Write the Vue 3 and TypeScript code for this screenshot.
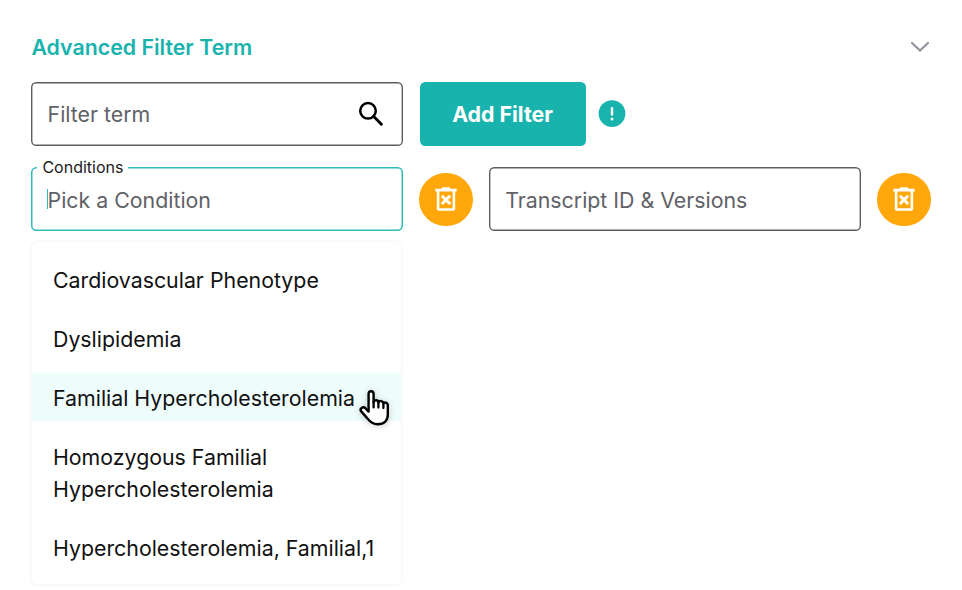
<script setup lang="ts">
import { ref } from 'vue'

const conditions: string[] = [
  'Cardiovascular Phenotype',
  'Dyslipidemia',
  'Familial Hypercholesterolemia',
  'Homozygous Familial Hypercholesterolemia',
  'Hypercholesterolemia, Familial,1',
]
const active = ref(2)
</script>

<template>
  <main class="panel">
    <header class="head">
      <h2 class="title"><span>Advanced Filter Term</span></h2>
      <svg class="chevron" viewBox="0 0 20 12" width="20" height="12">
        <path d="M2 2 L10 9.6 L18 2" fill="none" stroke="#9294a0" stroke-width="2.2" stroke-linecap="round" />
      </svg>
    </header>

    <div class="row">
      <div class="field">
        <span class="placeholder">Filter term</span>
        <svg class="search" viewBox="0 0 26 26" width="26" height="26">
          <circle cx="10" cy="9.8" r="7.8" fill="none" stroke="#000" stroke-width="2.5" />
          <path d="M15.5 15.3 L23.4 23.2" stroke="#000" stroke-width="2.9" stroke-linecap="round" />
        </svg>
      </div>
      <button class="add"><span>Add Filter</span></button>
      <svg class="info" viewBox="0 0 28 28" width="28" height="28">
        <circle cx="14" cy="13.6" r="13.4" fill="#18b3ad" />
        <path d="M14 8.2 V14.6" stroke="#fff" stroke-width="2.4" stroke-linecap="round" />
        <circle cx="14" cy="19" r="1.5" fill="#fff" />
      </svg>
    </div>

    <div class="row second">
      <div class="field focused">
        <span class="label"><span>Conditions</span></span>
        <i class="caret"></i>
        <span class="placeholder">Pick a Condition</span>
      </div>
      <button class="remove">
        <svg viewBox="0 0 22 24" width="22" height="24">
          <path d="M0.3 1.8 H6.5 L7.5 0.2 H14.5 L15.5 1.8 H21.7 V4.5 H0.3 Z" fill="#fff" />
          <path d="M3.1 4 V21.2 Q3.1 22.5 4.4 22.5 H17.6 Q18.9 22.5 18.9 21.2 V4" fill="none" stroke="#fff" stroke-width="2.6" />
          <path d="M6.9 8.8 L15.1 17 M15.1 8.8 L6.9 17" fill="none" stroke="#fff" stroke-width="3" />
        </svg>
      </button>
      <div class="field">
        <span class="placeholder">Transcript ID &amp; Versions</span>
      </div>
      <button class="remove">
        <svg viewBox="0 0 22 24" width="22" height="24">
          <path d="M0.3 1.8 H6.5 L7.5 0.2 H14.5 L15.5 1.8 H21.7 V4.5 H0.3 Z" fill="#fff" />
          <path d="M3.1 4 V21.2 Q3.1 22.5 4.4 22.5 H17.6 Q18.9 22.5 18.9 21.2 V4" fill="none" stroke="#fff" stroke-width="2.6" />
          <path d="M6.9 8.8 L15.1 17 M15.1 8.8 L6.9 17" fill="none" stroke="#fff" stroke-width="3" />
        </svg>
      </button>
    </div>

    <ul class="menu">
      <li v-for="(item, i) in conditions" :key="item" class="option" :class="{ active: i === active }" @mouseenter="active = i">
        {{ item }}
      </li>
    </ul>

    <svg class="pointer" viewBox="0 0 32 38" width="32" height="38">
      <path d="M9.6 21.4 V5 C9.6 1.4 14.6 1.4 14.6 5 V13.6 C14.6 10.4 19.4 10.6 19.4 13.6 C19.8 11.2 24.4 11.6 24.4 14.6 C25 12.8 28.8 13.4 28.8 16.4 V25.4 C28.8 32 24.6 35.2 18.6 35.2 C13.4 35.2 10.8 32.6 8.4 29.4 L2.2 22.4 C0.2 19.6 4 17 6.4 19.2 L9.6 22.6 Z" fill="#fff" stroke="#000" stroke-width="2.4" stroke-linejoin="round" />
      <path d="M14.6 13 V18.4 M19.4 13.6 V18.6 M24.4 14.8 V19" stroke="#000" stroke-width="2.3" stroke-linecap="round" />
    </svg>
  </main>
</template>

<style>
body {
  background: #fff;
}
</style>

<style scoped>
.panel {
  position: relative;
  box-sizing: border-box;
  height: 590px;
  padding: 31px 31px 0 31.4px;
  font-family: Inter, sans-serif;
  font-size: 21.33px;
  line-height: 32px;
  color: #111;
  overflow: hidden;
}
.head {
  display: flex;
  justify-content: space-between;
  align-items: center;
  height: 32px;
}
.title {
  margin: 0;
  font-size: 21.33px;
  font-weight: 600;
  color: #18b3ad;
}
.chevron {
  margin: 0 1px 0 0;
}
.row {
  display: flex;
  align-items: center;
  height: 64px;
  margin-top: 19px;
}
.second {
  margin-top: 21.3px;
}
.field {
  position: relative;
  box-sizing: border-box;
  display: flex;
  align-items: center;
  justify-content: space-between;
  flex: none;
  width: 372px;
  height: 64px;
  padding: 0 19px 0 16.2px;
  border-radius: 5.3px;
  box-shadow: inset 0 0 0 1.4px #5c5c62;
  color: #616167;
}
.second .field {
  padding-top: 1px;
}
.focused {
  box-shadow: inset 0 0 0 1.5px #2fbdb7;
}
.label {
  position: absolute;
  left: 6px;
  top: -12px;
  padding: 0 5px;
  background: #fff;
  color: #1b1b1b;
  font-size: 16px;
  line-height: 24px;
}
.caret {
  position: absolute;
  left: 15.4px;
  top: 22px;
  width: 1.3px;
  height: 20px;
  background: #2fbdb7;
}
.add {
  width: 166px;
  height: 64px;
  margin-left: 16.2px;
  padding: 0;
  border: 0;
  border-radius: 5.3px;
  background: #18b3ad;
  color: #fff;
  font: 700 21.33px/32px Inter, sans-serif;
}
.info {
  margin-left: 12.6px;
}
.remove {
  display: flex;
  align-items: center;
  justify-content: center;
  flex: none;
  width: 53.6px;
  height: 53.6px;
  margin: 0 16px;
  padding: 0;
  border: 0;
  border-radius: 50%;
  background: #ffa70b;
}
.menu {
  box-sizing: border-box;
  display: flex;
  flex-direction: column;
  gap: 11px;
  width: 369px;
  height: 342px;
  margin: 10.7px 0 0 0.3px;
  padding: 13px 0 0;
  list-style: none;
  border-radius: 5.3px;
  background: #fff;
  box-shadow: 0 0 4px rgba(0, 0, 0, 0.07);
}
.option {
  padding: 9px 21.3px 7px;
}
.active {
  background: #effcfc;
}
.pointer {
  position: absolute;
  left: 359px;
  top: 389px;
  filter: drop-shadow(0 1px 3px rgba(0, 0, 0, 0.2));
}
</style>
